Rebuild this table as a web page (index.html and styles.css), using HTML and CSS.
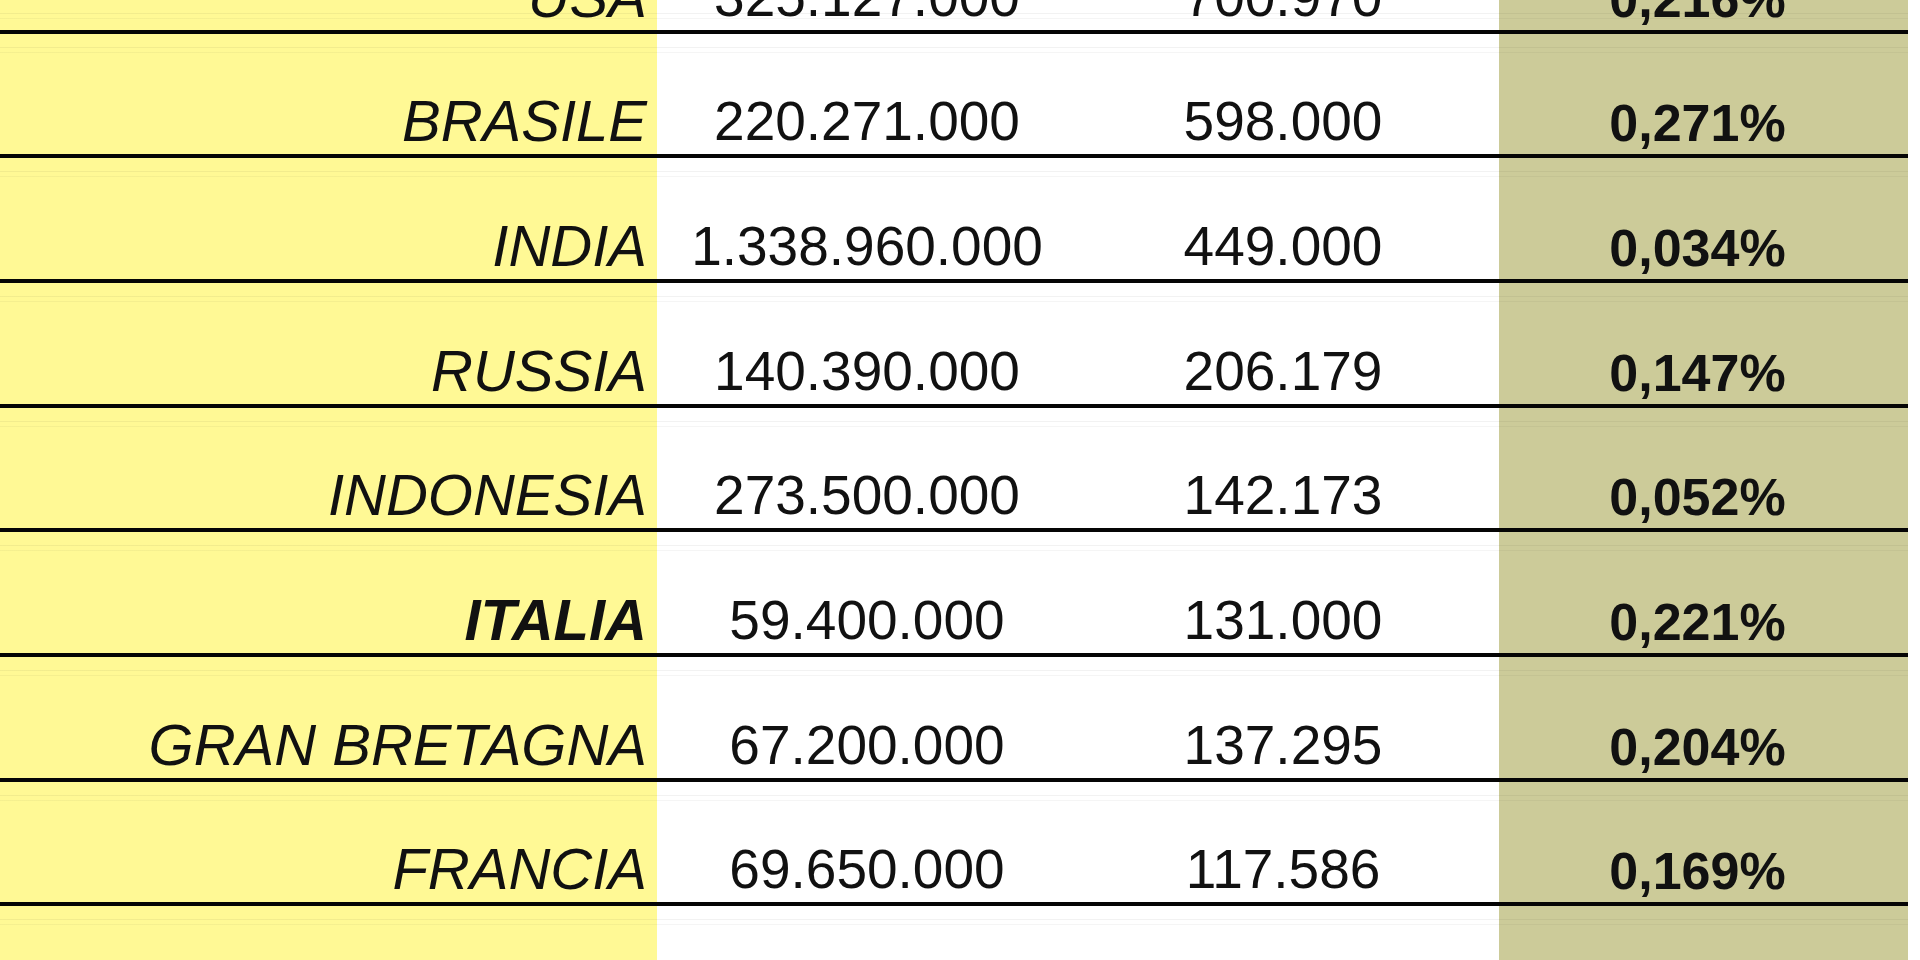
FILE: index.html
```html
<!DOCTYPE html>
<html lang="it">
<head>
<meta charset="utf-8">
<title>Tabella</title>
<link rel="stylesheet" href="styles.css">
</head>
<body>
<div class="sheet">
  <div class="row row-cut">
    <div class="c name">USA</div>
    <div class="c pop">325.127.000</div>
    <div class="c deaths">700.970</div>
    <div class="c pct">0,216%</div>
  </div>
  <div class="row">
    <div class="c name">BRASILE</div>
    <div class="c pop">220.271.000</div>
    <div class="c deaths">598.000</div>
    <div class="c pct">0,271%</div>
  </div>
  <div class="row">
    <div class="c name">INDIA</div>
    <div class="c pop">1.338.960.000</div>
    <div class="c deaths">449.000</div>
    <div class="c pct">0,034%</div>
  </div>
  <div class="row">
    <div class="c name">RUSSIA</div>
    <div class="c pop">140.390.000</div>
    <div class="c deaths">206.179</div>
    <div class="c pct">0,147%</div>
  </div>
  <div class="row">
    <div class="c name">INDONESIA</div>
    <div class="c pop">273.500.000</div>
    <div class="c deaths">142.173</div>
    <div class="c pct">0,052%</div>
  </div>
  <div class="row">
    <div class="c name name-bold">ITALIA</div>
    <div class="c pop">59.400.000</div>
    <div class="c deaths">131.000</div>
    <div class="c pct">0,221%</div>
  </div>
  <div class="row">
    <div class="c name">GRAN BRETAGNA</div>
    <div class="c pop">67.200.000</div>
    <div class="c deaths">137.295</div>
    <div class="c pct">0,204%</div>
  </div>
  <div class="row">
    <div class="c name">FRANCIA</div>
    <div class="c pop">69.650.000</div>
    <div class="c deaths">117.586</div>
    <div class="c pct">0,169%</div>
  </div>
  <div class="row row-end">
    <div class="c name"></div>
    <div class="c pop"></div>
    <div class="c deaths"></div>
    <div class="c pct"></div>
  </div>
</div>
</body>
</html>
```

FILE: styles.css
```css
html, body {
  margin: 0;
  padding: 0;
  background: #ffffff;
  overflow: hidden;
}

body {
  width: 1920px;
  height: 960px;
  font-family: "Liberation Sans", Arial, sans-serif;
  color: #111111;
}

.sheet {
  width: 1908px;
}

.row {
  display: flex;
  height: 124.7px;
  box-sizing: border-box;
  border-bottom: 4px solid #050505;
}

.row-cut {
  height: 33.5px;
  overflow: hidden;
}

.row-end {
  height: 54px;
  border-bottom: 0;
}

.c {
  display: flex;
  align-items: flex-end;
  box-sizing: border-box;
  line-height: 1;
  white-space: nowrap;
  background-image: linear-gradient(to bottom,
    transparent 13px,
    rgba(0, 0, 0, 0.05) 13px,
    rgba(0, 0, 0, 0.05) 14px,
    transparent 14px,
    transparent 18px,
    rgba(0, 0, 0, 0.04) 18px,
    rgba(0, 0, 0, 0.04) 19px,
    transparent 19px);
}

.name {
  width: 657px;
  justify-content: flex-end;
  padding-right: 10px;
  padding-bottom: 4px;
  background-color: #fff995;
  font-size: 58px;
  font-style: italic;
}

.name-bold {
  font-weight: bold;
}

.pop {
  width: 420px;
  justify-content: center;
  padding-bottom: 5px;
  font-size: 55px;
}

.deaths {
  width: 422px;
  justify-content: center;
  padding-right: 10px;
  padding-bottom: 5px;
  font-size: 55px;
}

.pct {
  width: 409px;
  justify-content: center;
  padding-right: 12px;
  padding-bottom: 5px;
  background-color: #cccb99;
  font-size: 52px;
  font-weight: bold;
}
```
